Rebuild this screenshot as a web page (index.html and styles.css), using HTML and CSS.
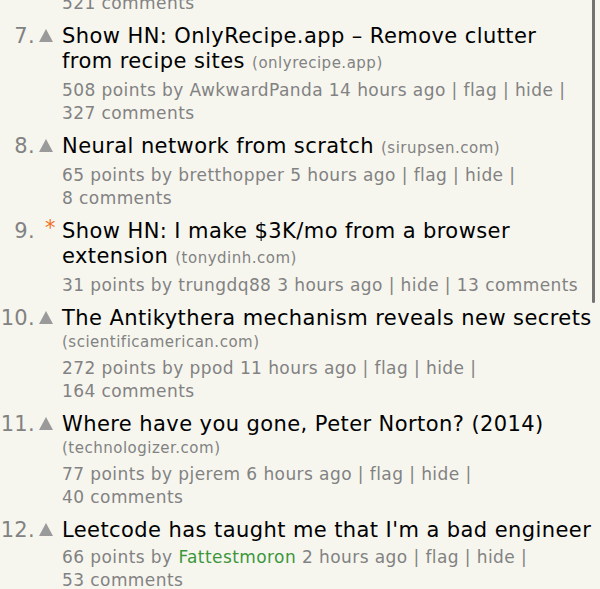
FILE: index.html
```html
<!DOCTYPE html>
<html>
<head>
<meta charset="utf-8">
<link rel="stylesheet" href="styles.css">
</head>
<body>
<div class="page">
<div class="list">
  <div class="item first">
    <div class="rank"></div><div class="vote"></div>
    <div class="body"><div class="sub">521&nbsp;comments</div></div>
  </div>

  <div class="item">
    <div class="rank">7.</div><div class="vote"><span class="arrow"></span></div>
    <div class="body">
      <div class="title">Show HN: OnlyRecipe.app – Remove clutter from recipe sites <span class="site">(onlyrecipe.app)</span></div>
      <div class="sub">508 points by AwkwardPanda 14&nbsp;hours&nbsp;ago | flag | hide | 327&nbsp;comments</div>
    </div>
  </div>

  <div class="item">
    <div class="rank">8.</div><div class="vote"><span class="arrow"></span></div>
    <div class="body">
      <div class="title">Neural network from scratch <span class="site">(sirupsen.com)</span></div>
      <div class="sub">65 points by bretthopper 5&nbsp;hours&nbsp;ago | flag | hide | 8&nbsp;comments</div>
    </div>
  </div>

  <div class="item">
    <div class="rank">9.</div><div class="vote"><span class="star">*</span></div>
    <div class="body">
      <div class="title">Show HN: I make $3K/mo from a browser extension <span class="site">(tonydinh.com)</span></div>
      <div class="sub">31 points by trungdq88 3&nbsp;hours&nbsp;ago | hide | 13&nbsp;comments</div>
    </div>
  </div>

  <div class="item">
    <div class="rank">10.</div><div class="vote"><span class="arrow"></span></div>
    <div class="body">
      <div class="title">The Antikythera mechanism reveals new secrets</div>
      <div class="site site-line">(scientificamerican.com)</div>
      <div class="sub">272 points by ppod 11&nbsp;hours&nbsp;ago | flag | hide | 164&nbsp;comments</div>
    </div>
  </div>

  <div class="item">
    <div class="rank">11.</div><div class="vote"><span class="arrow"></span></div>
    <div class="body">
      <div class="title">Where have you gone, Peter Norton? (2014)</div>
      <div class="site site-line">(technologizer.com)</div>
      <div class="sub">77 points by pjerem 6&nbsp;hours&nbsp;ago | flag | hide | 40&nbsp;comments</div>
    </div>
  </div>

  <div class="item">
    <div class="rank">12.</div><div class="vote"><span class="arrow"></span></div>
    <div class="body">
      <div class="title">Leetcode has taught me that I'm a bad engineer</div>
      <div class="sub">66 points by <span class="new">Fattestmoron</span> 2&nbsp;hours&nbsp;ago | flag | hide | 53&nbsp;comments</div>
    </div>
  </div>
</div>
<svg class="thumb" width="3" height="303" viewBox="0 0 3 303"><rect x="0" y="0" width="3" height="303" rx="1.5" fill="#737373"/><rect x="0" y="0" width="3" height="10" fill="#737373"/></svg>
</div>
</body>
</html>
```
FILE: styles.css
```css
html, body {
  margin: 0;
  padding: 0;
  background: #f6f6ef;
}
body {
  font-family: "DejaVu Sans", Verdana, sans-serif;
  color: #000;
}
.page {
  position: relative;
  width: 600px;
  height: 589px;
  overflow: hidden;
}
.thumb {
  position: absolute;
  left: 592px;
  top: 0;
  display: block;
}
.list {
  margin-top: -8px;
  width: 592px;
}
.item {
  display: grid;
  grid-template-columns: 35px 27px 1fr;
  margin-bottom: 9px;
}
.rank {
  font-size: 21px;
  line-height: 25px;
  letter-spacing: 0.3px;
  color: #828282;
  text-align: right;
  white-space: nowrap;
}
.vote {
  display: flex;
  justify-content: flex-start;
  padding-left: 4px;
  padding-top: 5px;
}
.arrow {
  width: 0;
  height: 0;
  border-left: 7px solid transparent;
  border-right: 7px solid transparent;
  border-bottom: 13px solid #9a9a9a;
}
.star {
  color: #f26f21;
  font-size: 21px;
  line-height: 18px;
  margin-top: -5px;
  margin-left: 6px;
}
.title {
  font-size: 21px;
  line-height: 25px;
  letter-spacing: 0.42px;
  margin-bottom: 3px;
}
.site {
  font-size: 15px;
  letter-spacing: 0.5px;
  color: #828282;
}
.title + .site-line {
  margin-top: -3px;
  line-height: 23px;
  margin-bottom: 3px;
}
.sub {
  font-size: 17px;
  line-height: 23px;
  letter-spacing: 0.42px;
  color: #828282;
}
.new {
  color: #3c963c;
}
```
